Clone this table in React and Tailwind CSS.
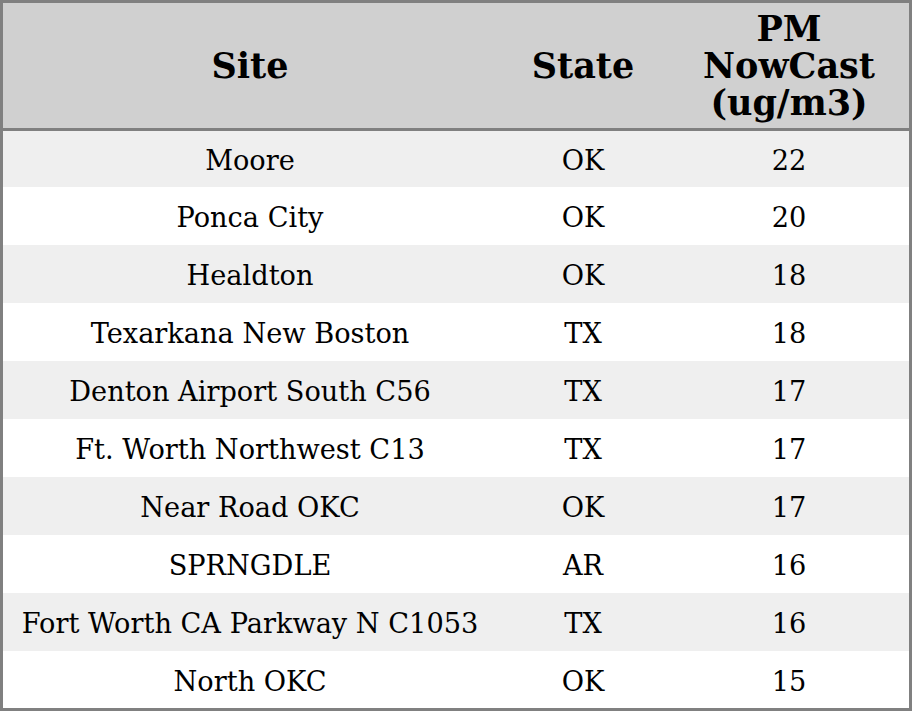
import React from "react";

const rows = [
  ["Moore", "OK", "22"],
  ["Ponca City", "OK", "20"],
  ["Healdton", "OK", "18"],
  ["Texarkana New Boston", "TX", "18"],
  ["Denton Airport South C56", "TX", "17"],
  ["Ft. Worth Northwest C13", "TX", "17"],
  ["Near Road OKC", "OK", "17"],
  ["SPRNGDLE", "AR", "16"],
  ["Fort Worth CA Parkway N C1053", "TX", "16"],
  ["North OKC", "OK", "15"],
];

export default function App() {
  return (
    <div
      className="w-[912px] h-[711px] border-[3px] border-[#808080] flex flex-col text-black overflow-hidden"
      style={{ fontFamily: '"DejaVu Serif", serif' }}
    >
      <div className="h-[128px] shrink-0 bg-[#d0d0d0] border-b-[3px] border-[#808080] grid grid-cols-[494px_172px_240px] items-center text-center font-bold text-[35px] leading-[37px]">
        <div>Site</div>
        <div>State</div>
        <div>
          PM
          <br />
          NowCast
          <br />
          (ug/m3)
        </div>
      </div>
      <div className="flex-1 flex flex-col">
        {rows.map((r, i) => (
          <div
            key={i}
            className={
              "grid grid-cols-[494px_172px_240px] items-center text-center text-[27.2px] pt-[5px] " +
              (i === 0 ? "h-[56px] shrink-0 " : i === rows.length - 1 ? "flex-1 " : "h-[58px] shrink-0 ") +
              (i % 2 === 0 ? "bg-[#efefef]" : "bg-white")
            }
          >
            <div>{r[0]}</div>
            <div>{r[1]}</div>
            <div>{r[2]}</div>
          </div>
        ))}
      </div>
    </div>
  );
}
